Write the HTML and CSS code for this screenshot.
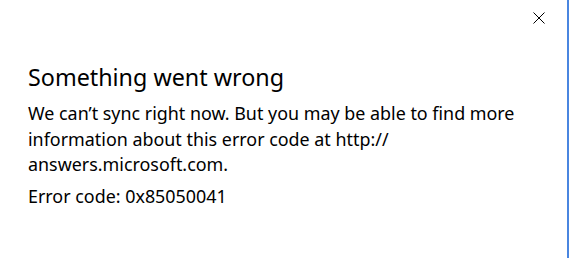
FILE: index.html
```html
<!DOCTYPE html>
<html>
<head>
<meta charset="utf-8">
<link rel="stylesheet" href="styles.css">
</head>
<body>
<div class="dialog">
  <div class="titlebar">
    <button class="close" aria-label="Close">
      <svg width="12" height="12" viewBox="0 0 12 12"><path d="M0.5 0.5 L11.5 11.5 M11.5 0.5 L0.5 11.5" stroke="#000" stroke-width="1" fill="none"/></svg>
    </button>
  </div>
  <div class="content">
    <h1 class="title">Something went wrong</h1>
    <p class="message">We can’t sync right now. But you may be able to find more<br>information about this error code at http://<br>answers.microsoft.com.</p>
    <p class="code">Error code: 0x85050041</p>
  </div>
</div>
</body>
</html>
```
FILE: styles.css
```css
html, body {
  margin: 0;
  padding: 0;
  background: #fff;
}
.dialog {
  width: 569px;
  height: 258px;
  border-right: 2px solid #4a86e0;
  box-sizing: border-box;
  font-family: "Noto Sans", "Open Sans", sans-serif;
  color: #000;
}
.titlebar {
  display: flex;
  justify-content: flex-end;
  height: 36px;
}
.close {
  width: 46px;
  height: 36px;
  border: 0;
  background: transparent;
  padding: 0;
  margin-right: 5px;
  display: flex;
  align-items: center;
  justify-content: center;
}
.close svg { display: block; }
.content {
  padding: 0 0 0 28px;
}
.title {
  margin: 26px 0 0 0;
  font-size: 23.3px;
  font-weight: normal;
  line-height: 30px;
}
.message {
  margin: 9px 0 0 0;
  font-size: 17.9px;
  line-height: 25.5px;
}
.code {
  margin: 6.5px 0 0 0;
  font-size: 17.9px;
  line-height: 25.5px;
}
```
